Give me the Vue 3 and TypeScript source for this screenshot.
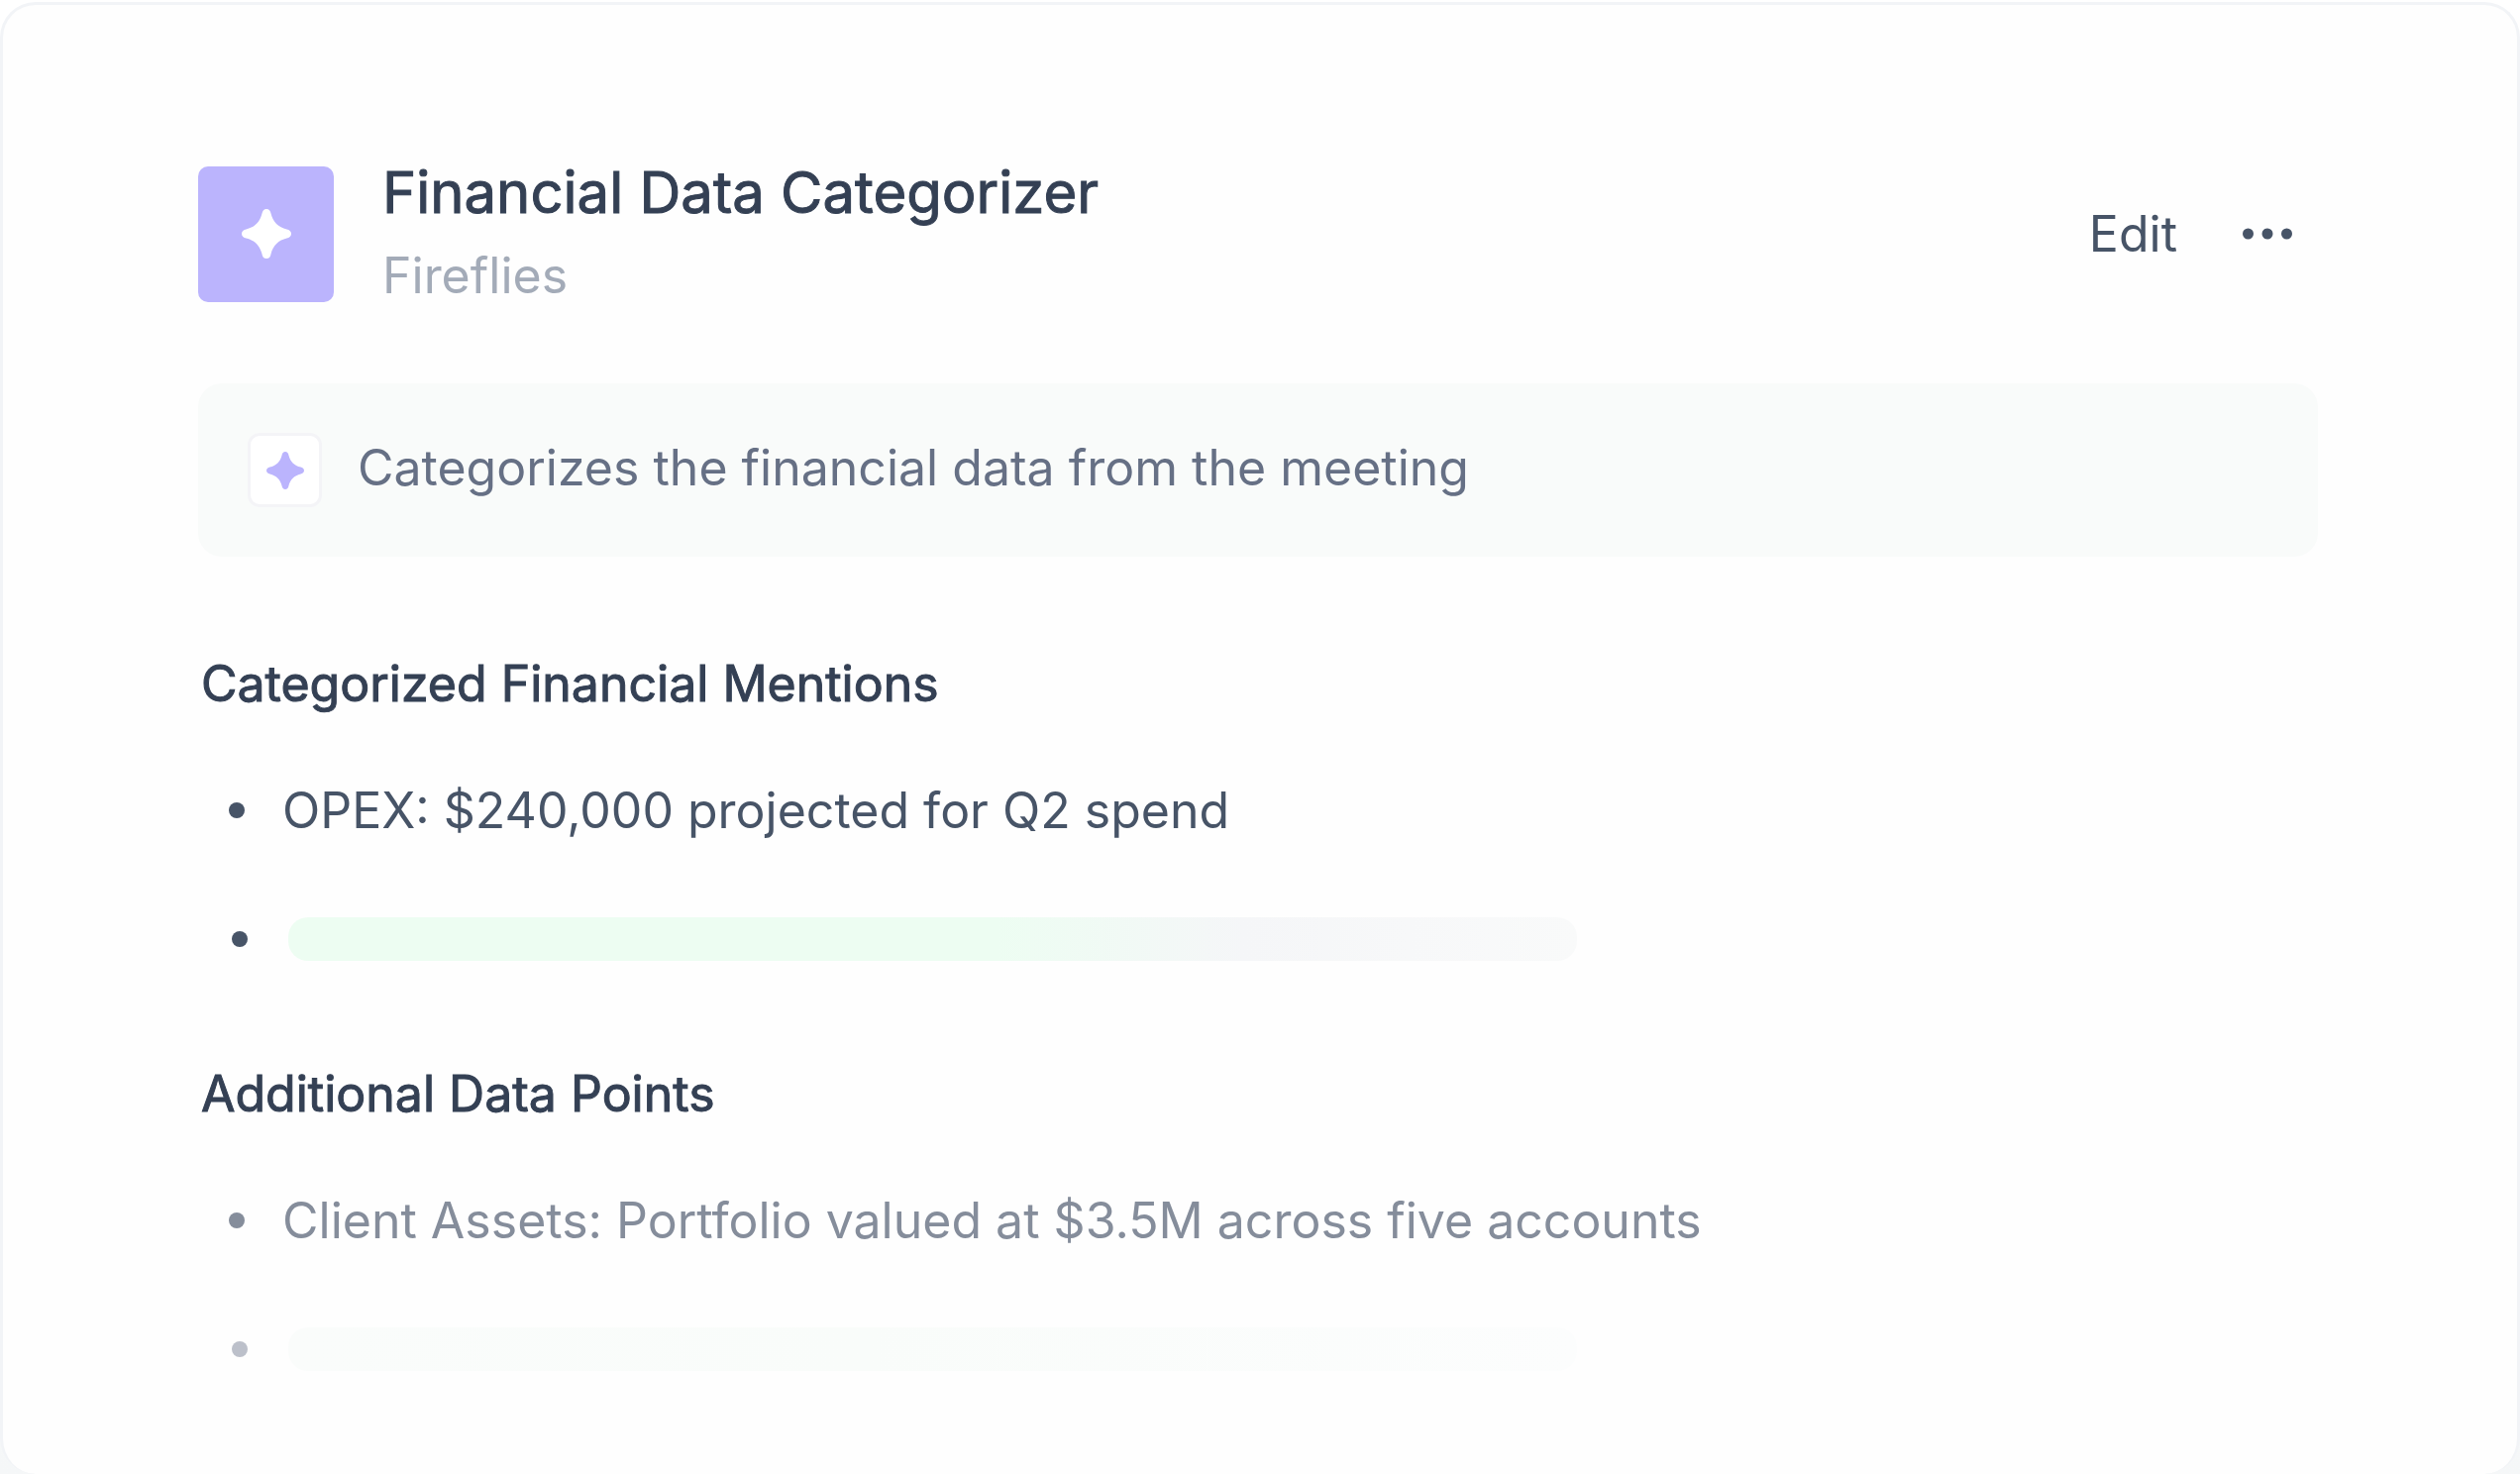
<script setup lang="ts">
interface Section {
  title: string
  item: string
  tone: 'solid' | 'faded'
}

const sections: Section[] = [
  { title: 'Categorized Financial Mentions', item: 'OPEX: $240,000 projected for Q2 spend', tone: 'solid' },
  { title: 'Additional Data Points', item: 'Client Assets: Portfolio valued at $3.5M across five accounts', tone: 'faded' },
]

const star =
  'M25 0C27.500 0 29 2 29.500 4.500C31.500 13 37 18.500 45.500 20.500C48 21 50 22.500 50 25C50 27.500 48 29 45.500 29.500C37 31.500 31.500 37 29.500 45.500C29 48.500 27.500 50 25 50C22.500 50 21 48.500 20.500 45.500C18.500 37 13 31.500 4.500 29.500C2 29 0 27.500 0 25C0 22.500 2 21 4.500 20.500C13 18.500 18.500 13 20.500 4.500C21 2 22.500 0 25 0Z'
</script>

<template>
  <main class="page">
    <article class="card">
      <header class="header">
        <div class="logo">
          <svg class="logo-star" viewBox="0 0 50 50" aria-hidden="true"><path :d="star" /></svg>
        </div>
        <div class="titles">
          <h1>Financial Data Categorizer</h1>
          <p class="author">Fireflies</p>
        </div>
        <div class="actions">
          <button type="button" class="edit">Edit</button>
          <button type="button" class="more" aria-label="More options">
            <svg viewBox="0 0 50 12" aria-hidden="true">
              <circle cx="5.500" cy="6" r="5.500" />
              <circle cx="25" cy="6" r="5.500" />
              <circle cx="44.500" cy="6" r="5.500" />
            </svg>
          </button>
        </div>
      </header>

      <div class="banner">
        <span class="badge">
          <svg viewBox="0 0 50 50" aria-hidden="true"><path :d="star" /></svg>
        </span>
        <p>Categorizes the financial data from the meeting</p>
      </div>

      <section v-for="s in sections" :key="s.title" class="section" :class="s.tone">
        <h2>{{ s.title }}</h2>
        <ul>
          <li>{{ s.item }}</li>
          <li class="loading"><span class="bar"></span></li>
        </ul>
      </section>
    </article>
  </main>
</template>

<style>
body {
  margin: 0;
  background: #ffffff;
}
</style>

<style scoped>
.page {
  min-height: 100vh;
  box-sizing: border-box;
  padding-top: 2px;
  display: flex;
  background: linear-gradient(#ffffff 50%, #f5f7f8 100%);
  font-family: Inter, "Liberation Sans", sans-serif;
}
.card {
  flex: 1;
  min-width: 0;
  box-sizing: border-box;
  padding: 147px 201px 64px 197px;
  border: 3px solid #f2f4f7;
  border-bottom: 0;
  border-radius: 36px;
  background: #fefefe;
}
h1,
h2,
p,
ul {
  margin: 0;
  padding: 0;
}
h1,
h2 {
  font-weight: 400;
  color: #344054;
  -webkit-text-stroke: 1px #344054;
}
.header {
  display: flex;
  align-items: center;
}
.logo {
  width: 137px;
  height: 137px;
  border-radius: 10px;
  background: #bbb4fd;
  display: flex;
  align-items: center;
  justify-content: center;
}
.logo-star {
  width: 50px;
  height: 50px;
  fill: #ffffff;
}
.titles {
  margin-left: 49px;
}
h1 {
  font-size: 58px;
  line-height: 84px;
}
.author {
  font-size: 50px;
  line-height: 84px;
  color: #a3abb8;
}
.actions {
  margin-left: auto;
  padding-right: 26px;
  display: flex;
  align-items: center;
  gap: 66px;
}
button {
  padding: 0;
  border: 0;
  background: none;
  font: inherit;
  color: #475467;
  cursor: pointer;
}
.edit {
  font-size: 50px;
  line-height: 64px;
}
.more {
  display: flex;
}
.more svg {
  width: 50px;
  height: 12px;
  fill: #475467;
}
.banner {
  margin-top: 67px;
  padding: 50px;
  display: flex;
  align-items: flex-start;
  gap: 36px;
  border-radius: 24px;
  background: #f9fbfa;
  font-size: 50px;
  line-height: 70px;
  color: #667085;
}
.badge {
  width: 75px;
  height: 75px;
  box-sizing: border-box;
  border: 3px solid #f4f4f7;
  border-radius: 12px;
  background: #ffffff;
  display: flex;
  align-items: center;
  justify-content: center;
}
.badge svg {
  width: 38px;
  height: 38px;
  fill: #bbb4fd;
}
.section {
  margin-top: 88px;
  color: #475467;
}
.section + .section {
  margin-top: 74px;
}
h2 {
  padding-left: 3px;
  font-size: 50px;
  line-height: 80px;
}
ul {
  list-style: none;
}
li {
  margin-top: 48px;
  padding-left: 31px;
  display: flex;
  align-items: center;
  gap: 38px;
  font-size: 50px;
  line-height: 80px;
}
li::before {
  content: "";
  width: 16px;
  height: 16px;
  flex: none;
  border-radius: 50%;
  background: currentColor;
}
.loading {
  height: 84px;
  padding-left: 34px;
  gap: 41px;
}
.bar {
  width: 1301px;
  height: 44px;
  border-radius: 20px;
  background: linear-gradient(90deg, #edfdf2 55%, #f5f6f8 74%, #f9fafa 100%);
}
.faded li {
  color: #858d9b;
}
.faded .loading {
  color: #bcc0ca;
}
.faded .bar {
  background: linear-gradient(90deg, #fafcfb, #f9fcfa 45%, #fcfdfd 100%);
}
</style>
